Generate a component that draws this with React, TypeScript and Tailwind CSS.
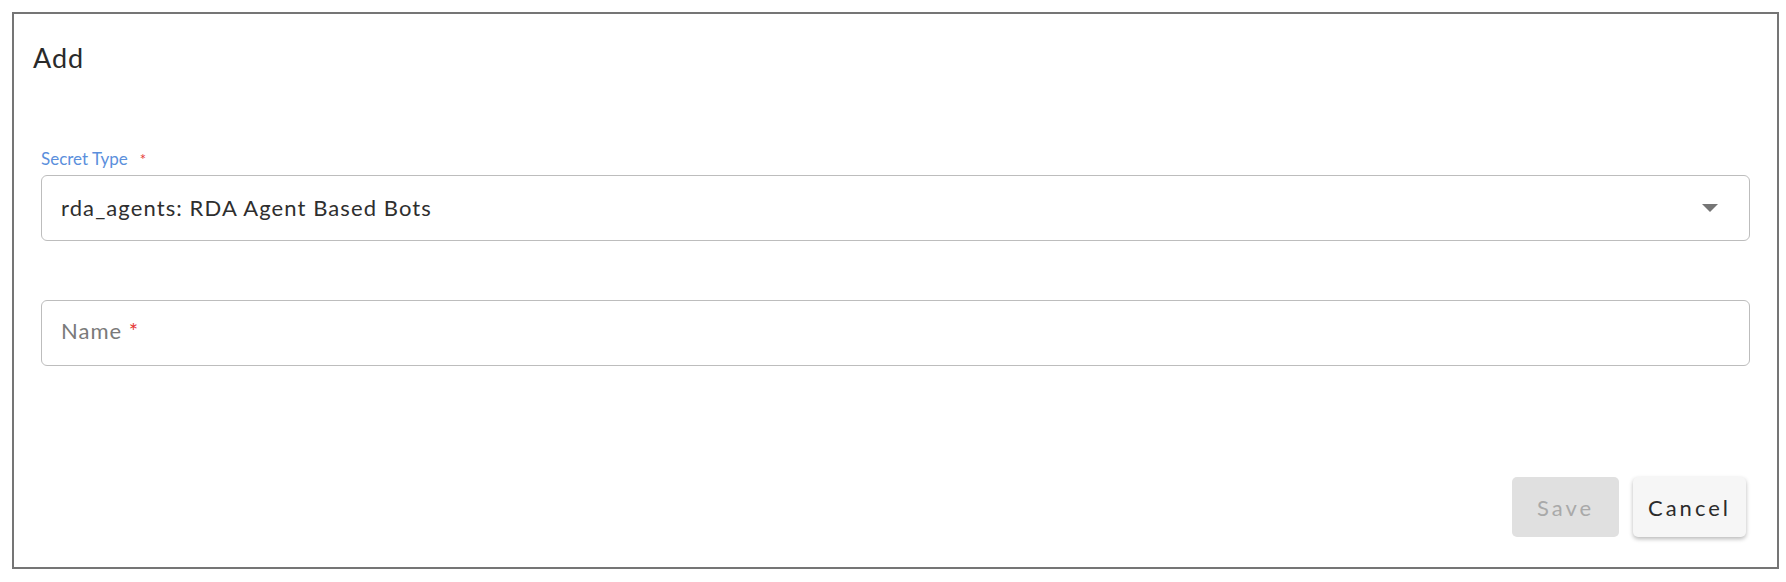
import { useState } from 'react';

const font = { fontFamily: 'Lato, "Open Sans", sans-serif' };

const Caret = () => (
  <svg width="16" height="8" viewBox="0 0 16 8" className="shrink-0">
    <path d="M0 0 L16 0 L8 8 Z" fill="#757575" />
  </svg>
);

export default function App() {
  const [name, setName] = useState('');
  const [secretType] = useState('rda_agents: RDA Agent Based Bots');

  return (
    <div className="w-[1786px] h-[582px] bg-white pt-[12px] pl-[12px]" style={font}>
      <div className="w-[1767px] h-[557px] border-2 border-[#757575] flex flex-col px-[27px]">
        <h1 className="mt-[28px] -ml-[8px] text-[27px] leading-[31px] tracking-[1px] text-[#2a2a2a] font-normal">Add</h1>

        <label className="mt-[76px] text-[17px] leading-[20px] text-[#5b8fdc] flex items-center">
          Secret Type
          <span className="ml-[12px] text-[#e53935] text-[15px]">*</span>
        </label>
        <div className="mt-[6px] h-[66px] border-[1.5px] border-[#bdbdbd] rounded-[6px] flex items-center justify-between pl-[19px] pr-[31px]">
          <span className="text-[22px] tracking-[1.1px] text-[#2e2e2e] -mt-[2px]">{secretType}</span>
          <Caret />
        </div>

        <div className="mt-[59px] h-[66px] border-[1.5px] border-[#bdbdbd] rounded-[6px] flex items-center pl-[19px] relative">
          {name === '' && (
            <span className="absolute left-[19px] top-[13px] text-[22px] tracking-[1px] text-[#7a7a7a] pointer-events-none">
              Name <span className="text-[#e53935]">*</span>
            </span>
          )}
          <input
            value={name}
            onChange={(e) => setName(e.target.value)}
            className="w-full h-full bg-transparent outline-none text-[22px] text-[#2e2e2e]"
          />
        </div>

        <div className="mt-[111px] flex justify-end gap-[14px] pr-[4px]">
          <button
            disabled
            className="w-[107px] h-[60px] rounded-[5px] bg-[#e0e0e0] text-[#a9a9a9] text-[22px] tracking-[3px]"
          >
            Save
          </button>
          <button className="w-[113px] h-[60px] rounded-[5px] bg-[#f6f6f6] text-[#2b2b2b] text-[22px] tracking-[3px] shadow-[0_2px_4px_rgba(0,0,0,0.28)]">
            Cancel
          </button>
        </div>
      </div>
    </div>
  );
}
